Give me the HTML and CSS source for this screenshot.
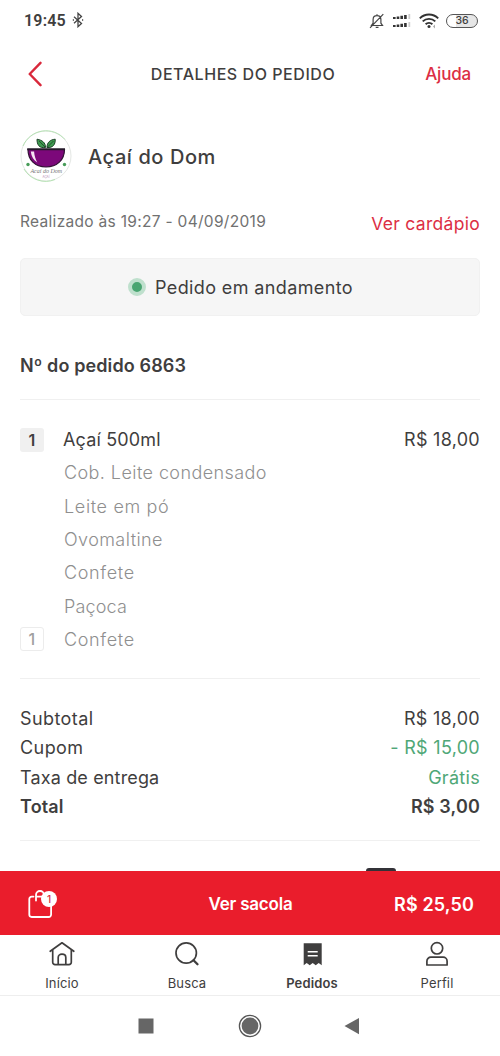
FILE: index.html
```
<!DOCTYPE html>
<html lang="pt-BR">
<head>
<meta charset="utf-8">
<title>Detalhes do pedido</title>
<link rel="stylesheet" href="styles.css">
</head>
<body>
<div class="screen">
  <div class="status">
    <span class="clock">19:45</span>
    <svg class="bt" width="12" height="16" viewBox="0 0 12 16"><path d="M2 4.700l7.500 6.800L6 14.700V1.300l3.500 3.200L2 11.300M.8 8h1.200M10 8h1.200" fill="none" stroke="#444" stroke-width="1.300"/></svg>
    <span class="status-icons">
      <svg width="16" height="16" viewBox="0 0 16 16"><path d="M2.500 12.500h11l-1.600-2.300V6.500C11.900 4 10.300 2.700 8 2.700S4.100 4 4.100 6.500v3.700zM8 2.700V1.200M6.700 14.300h2.800M1 14.800L14.300 1.200" fill="none" stroke="#444" stroke-width="1.200"/></svg>
      <svg width="20" height="16" viewBox="0 0 20 16"><g fill="#333"><path d="M1 4h2.600v2H1zM4.700 3.500h2.600V6H4.700zM8.400 2.800H11V6H8.400zM12.100 2h2.600v4h-2.600z"/><path d="M1 12h2.600v2H1zM4.700 11.500h2.600V14H4.700zM8.400 10.800H11V14H8.400zM12.100 10h2.600v4h-2.600z"/></g><path d="M16.400 1h1.800v5h-1.800zM16.400 9h1.800v5h-1.800z" fill="#ccc"/></svg>
      <svg width="20" height="16" viewBox="0 0 20 16"><g fill="none" stroke="#333" stroke-width="1.900"><path d="M.8 5.300a13 13 0 0 1 18.400 0"/><path d="M3.700 8.400a9 9 0 0 1 12.600 0"/><path d="M6.600 11.300a5 5 0 0 1 6.800 0"/></g><circle cx="10" cy="13.400" r="1.500" fill="#333"/><path d="M14 13.400l2-2v4z" fill="#aaa"/></svg>
      <span class="battery">36</span>
    </span>
  </div>

  <header class="header">
    <svg class="back" width="14" height="26" viewBox="0 0 14 26"><path d="M12.500 1.800L1.700 13l10.800 11.200" fill="none" stroke="#d9283b" stroke-width="2.400" stroke-linecap="round" stroke-linejoin="round"/></svg>
    <h1>DETALHES DO PEDIDO</h1>
    <a class="help">Ajuda</a>
  </header>

  <main class="content">
    <div class="store">
      <svg width="52" height="52" viewBox="0 0 52 52">
        <circle cx="26" cy="26" r="25" fill="#fff" stroke="#e4e7e4"/>
        <path d="M3 16A25 25 0 0 1 45 9.500M4 39a25 25 0 0 0 31 10.500" fill="none" stroke="#b5e2b3" stroke-width="1"/>
        <path d="M25.500 17.500C19 18.500 17 14.500 17 9.200c5.500 1 8.500 3.500 8.500 8.300zM27 17.500c0-5 3-7.800 8.200-8.300C35.500 14.500 33 18 27 17.500z" fill="#3f9a50" stroke="#1d4028"/>
        <path d="M19 11l6 6M33.500 11L27 17.500" stroke="#1d4028" stroke-width=".8"/>
        <path d="M8 19.500h36.500C44.500 30 37 37 26 37S8 30 8 19.500z" fill="#7c087a" stroke="#321235" stroke-width="1.200"/>
        <path d="M7.200 19.300h37.800" stroke="#25182a" stroke-width="2"/>
        <path d="M10.800 21.500c.5 5 2.800 8.700 6.500 11-2-4-3-7-3.200-11z" fill="#f6e5f4"/>
        <circle cx="8" cy="34.500" r="1.700" fill="#479c58"/><circle cx="44.500" cy="34.500" r="1.700" fill="#479c58"/>
        <text x="26.300" y="43" class="logo-script">Acaí do Dom</text>
        <text x="26" y="47.500" class="logo-sub">AÇAÍ</text>
      </svg>
      <h2>Açaí do Dom</h2>
    </div>

    <div class="meta"><span class="placed">Realizado às 19:27 - 04/09/2019</span><a class="menu">Ver cardápio</a></div>

    <div class="progress"><i class="dot"></i><span>Pedido em andamento</span></div>

    <h3 class="number">Nº do pedido 6863</h3>

    <ul class="items">
      <li class="main"><b class="qty">1</b><span class="product">Açaí 500ml</span><span class="price">R$ 18,00</span></li>
      <li><span class="w42">Cob. Leite condensado</span></li>
      <li><span class="w65">Leite em pó</span></li>
      <li><span class="w42">Ovomaltine</span></li>
      <li><span class="w65">Confete</span></li>
      <li><span>Paçoca</span></li>
      <li><b class="qty outline">1</b><span class="w65">Confete</span></li>
    </ul>

    <dl class="totals">
      <div><dt class="w42">Subtotal</dt><dd>R$ 18,00</dd></div>
      <div><dt class="w42">Cupom</dt><dd class="green">- R$ 15,00</dd></div>
      <div><dt>Taxa de entrega</dt><dd class="green">Grátis</dd></div>
      <div class="total"><dt>Total</dt><dd>R$ 3,00</dd></div>
    </dl>
    <div class="payment"><i class="card"></i></div>
  </main>

  <div class="bag">
    <div class="bag-icon">
      <svg width="26" height="32" viewBox="0 0 26 32"><path d="M9 12.500V7a4 4 0 0 1 8 0v5.500M6.500 8.600H4.700a2.400 2.400 0 0 0-2.400 2.400v15.600A2.400 2.400 0 0 0 4.700 29h17a2.400 2.400 0 0 0 2.400-2.400V11a2.400 2.400 0 0 0-2.400-2.400H9" fill="none" stroke="#fff" stroke-width="1.800" stroke-linecap="round"/></svg>
      <span class="badge">1</span>
    </div>
    <span class="bag-label">Ver sacola</span>
    <span class="bag-total">R$ 25,50</span>
  </div>

  <nav class="tabs">
    <a><svg width="26" height="26" viewBox="0 0 26 26"><path d="M1.200 10.300L13 1.800l11.800 8.500M3.700 8.700v12.600a2.300 2.300 0 0 0 2.300 2.300h14a2.300 2.300 0 0 0 2.300-2.300V8.700M9.200 23.500v-7c0-2 1.500-3.300 3.800-3.300s3.800 1.300 3.800 3.300v7" fill="none" stroke="#3f3e3e" stroke-width="1.700" stroke-linecap="round" stroke-linejoin="round"/></svg><span>Início</span></a>
    <a><svg width="26" height="26" viewBox="0 0 26 26"><circle cx="12.200" cy="12" r="10.200" fill="none" stroke="#3f3e3e" stroke-width="1.700"/><path d="M19.500 19.300l4 4" stroke="#3f3e3e" stroke-width="2.300" stroke-linecap="round"/></svg><span>Busca</span></a>
    <a class="active"><svg width="26" height="26" viewBox="0 0 26 26"><path d="M4.700 2.300h18v21.900l-3-2.200-3 2.200-3-2.200-3 2.200-3-2.200-3 2.200z" fill="#3f3e3e"/><path d="M8.700 10.700h10M8.700 14.700h10" stroke="#fff" stroke-width="1.500"/></svg><span>Pedidos</span></a>
    <a><svg width="26" height="26" viewBox="0 0 26 26"><circle cx="13" cy="7.300" r="5.700" fill="none" stroke="#3f3e3e" stroke-width="1.700"/><path d="M2.900 24v-3.800a4 4 0 0 1 4-4h12.200a4 4 0 0 1 4 4V24z" fill="none" stroke="#3f3e3e" stroke-width="1.700" stroke-linejoin="round"/></svg><span>Perfil</span></a>
  </nav>

  <div class="system">
    <svg width="24" height="24" viewBox="0 0 24 24"><rect x="4.500" y="4.500" width="15" height="15" fill="#666"/></svg>
    <svg width="24" height="24" viewBox="0 0 24 24"><circle cx="12" cy="12" r="10.600" fill="none" stroke="#555" stroke-width="1.300"/><circle cx="12" cy="12" r="8.400" fill="#666"/></svg>
    <svg width="24" height="24" viewBox="0 0 24 24"><path d="M2.500 12L17 3.900v16.300z" fill="#666"/></svg>
  </div>
</div>
</body>
</html>
```
FILE: styles.css
```
* { box-sizing: border-box; margin: 0; padding: 0; }
body { background: #fff; color: #3f3e3e; font: 400 18px "Inter", sans-serif; }
svg { display: block; flex: none; }
ul { list-style: none; }
.screen { width: 500px; height: 1056px; display: flex; flex-direction: column; overflow: hidden; }

.status { height: 42px; flex: none; display: flex; align-items: center; padding: 0 22px 2px 24px; }
.clock { font: 600 16px "Roboto", sans-serif; letter-spacing: .2px; padding-top: 1px; }
.bt { margin-left: 6px; }
.status-icons { margin-left: auto; display: flex; align-items: center; gap: 7px; padding-top: 1px; }
.battery { width: 32px; height: 14px; border: 1.500px solid #555; border-radius: 7px; display: flex; align-items: center; justify-content: center; background: linear-gradient(90deg, #fff 30%, #e6e6e6 30%); font: 500 10.500px "Inter", sans-serif; }

.header { height: 64px; flex: none; display: grid; grid-template-columns: 80px 1fr 80px; align-items: center; padding: 0 28px; }
.header h1 { margin: 0 -10px; padding: 0 14px 1px 0; font-size: 16px; font-weight: 500; letter-spacing: .55px; text-align: center; white-space: nowrap; }
.help { color: #dc2e44; font-size: 17px; font-weight: 500; letter-spacing: -.2px; justify-self: end; padding-right: 1px; }

.content { flex: 1; min-height: 0; padding: 24px 20px 0; display: flex; flex-direction: column; }
.store { display: flex; align-items: center; gap: 16px; height: 52px; flex: none; }
.store h2 { font-size: 20px; font-weight: 500; letter-spacing: .58px; padding-top: 1px; }
.logo-script { font: italic 6px "Liberation Serif", serif; text-anchor: middle; fill: #777; }
.logo-sub { font: 3px "Inter", sans-serif; text-anchor: middle; fill: #b58ab5; }

.meta { height: 76px; flex: none; display: flex; justify-content: space-between; align-items: center; }
.placed { font-size: 15.500px; letter-spacing: .3px; color: #717171; padding-top: 2px; }
.menu { font-size: 17.500px; letter-spacing: .3px; color: #dc2e44; padding-top: 7px; }

.progress { height: 58px; flex: none; display: flex; align-items: center; justify-content: center; gap: 9px; padding-right: 19px; background: #f6f6f6; border: 1px solid #f1f1f1; border-radius: 5px; letter-spacing: .38px; }
.dot { width: 18px; height: 18px; border-radius: 50%; background: #49a571; border: 4px solid #bfe0cd; }

.number { height: 84px; flex: none; padding-top: 15px; line-height: 69px; font-size: 18px; font-weight: 600; letter-spacing: .12px; border-bottom: 1px solid #f0f0f0; }

.items { flex: none; padding: 23px 0 22px; border-bottom: 1px solid #f0f0f0; }
.items li { height: 33.300px; display: flex; align-items: center; padding-left: 44px; font-weight: 300; letter-spacing: .15px; color: #8f8f8f; }
.items li:has(.qty) { padding-left: 0; }
.items .main { font-weight: 380; color: #3f3e3e; }
.qty { width: 24px; height: 24px; margin-right: 20px; display: flex; align-items: center; justify-content: center; background: #f0f0f0; border-radius: 3px; font-size: 16px; font-weight: 600; }
.main .qty { margin-right: 19px; }
.outline { background: #fff; border: 1px solid #ececec; font-weight: 500; color: #a0a0a0; }
.price { margin-left: auto; letter-spacing: .28px; }
.w42 { letter-spacing: .42px; }
.items .w65 { letter-spacing: .65px; }

.totals { flex: none; padding: 25px 0 19px; border-bottom: 1px solid #f0f0f0; font-weight: 370; }
.totals div { height: 29.200px; display: flex; align-items: center; justify-content: space-between; letter-spacing: .15px; }
.totals dd { letter-spacing: .3px; }
.totals .green { color: #4fa777; }
.totals .total { font-weight: 600; }
.totals .total dd { letter-spacing: .14px; }
.payment { flex: 1; display: flex; align-items: flex-end; justify-content: flex-end; padding-right: 84px; }
.card { width: 30px; height: 3px; background: #333238; border-radius: 3px 3px 0 0; }

.bag { height: 64px; flex: none; display: grid; grid-template-columns: 100px 1fr 100px; align-items: center; padding: 2px 26px 0 27px; background: #ea1d2c; color: #fff; font-weight: 600; }
.bag-icon { position: relative; }
.badge { position: absolute; left: 14px; top: 3px; width: 16px; height: 16px; border-radius: 50%; background: #fff; color: #d9283b; font-size: 10px; font-weight: 500; line-height: 16px; text-align: center; }
.bag-label { font-size: 17px; letter-spacing: -.2px; text-align: center; }
.bag-total { text-align: right; letter-spacing: .14px; }

.tabs { height: 61px; flex: none; display: grid; grid-template-columns: repeat(4, 125px); border-bottom: 1px solid #eee; }
.tabs a { display: flex; flex-direction: column; align-items: center; gap: 7px; padding: 6px 1px 0 0; font-size: 13px; line-height: 18px; letter-spacing: .15px; }
.tabs .active { font-weight: 600; }

.system { height: 60px; flex: none; display: flex; align-items: center; justify-content: center; gap: 80px; }
```
